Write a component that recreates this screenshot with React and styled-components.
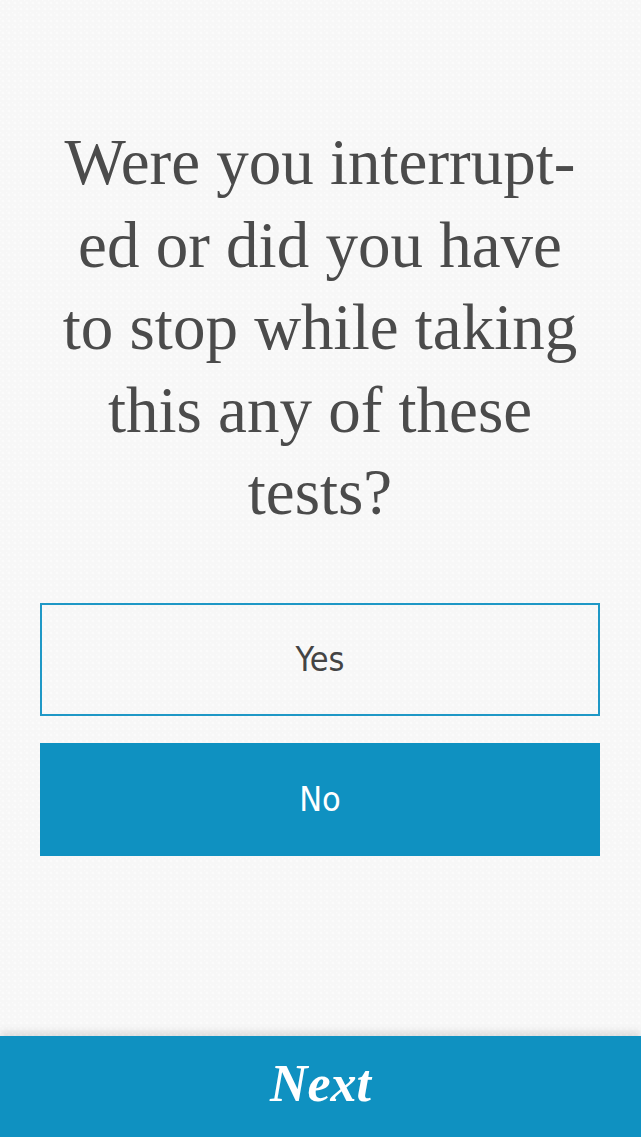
import React, { useState } from "react";
import styled, { createGlobalStyle } from "styled-components";

const GlobalStyle = createGlobalStyle`
  html, body {
    margin: 0;
    padding: 0;
  }
  body {
    background-color: #f7f7f7;
    background-image:
      radial-gradient(circle at 3px 3px, #fbfbfb 1.4px, transparent 1.6px),
      radial-gradient(circle at 0px 0px, #fbfbfb 1.4px, transparent 1.6px);
    background-size: 6px 6px;
  }
`;

const lines = [
  "Were you interrupt-",
  "ed or did you have",
  "to stop while taking",
  "this any of these",
  "tests?",
];

const options = ["Yes", "No"];

export default function App() {
  const [answer, setAnswer] = useState("No");

  return (
    <>
      <GlobalStyle />
      <Page>
        <Content>
          <Question>
            {lines.map((line) => (
              <Line key={line}>{line}</Line>
            ))}
          </Question>
          <Options>
            {options.map((option) => (
              <Option
                key={option}
                $selected={answer === option}
                onClick={() => setAnswer(option)}
              >
                {option}
              </Option>
            ))}
          </Options>
        </Content>
        <Footer>
          <NextButton>Next</NextButton>
        </Footer>
      </Page>
    </>
  );
}

const Page = styled.div`
  display: flex;
  flex-direction: column;
  min-height: 100vh;
`;

const Content = styled.main`
  flex: 1;
  padding: 121px 41px 0 40px;
`;

const Question = styled.h1`
  margin: 0;
  font-family: "Liberation Serif", Georgia, serif;
  font-weight: 400;
  font-size: 65px;
  line-height: 82.5px;
  color: #4b4b4b;
  text-align: center;
`;

const Line = styled.span`
  display: block;
  white-space: nowrap;
`;

const Options = styled.div`
  display: flex;
  flex-direction: column;
  gap: 27px;
  margin-top: 69px;
`;

const Option = styled.button`
  display: flex;
  align-items: center;
  justify-content: center;
  height: 113px;
  padding: 0;
  border: 2px solid ${(p) => (p.$selected ? "#0f91c1" : "#1f98c6")};
  background: ${(p) => (p.$selected ? "#0f91c1" : "transparent")};
  color: ${(p) => (p.$selected ? "#ffffff" : "#444444")};
  font-family: "DejaVu Sans Condensed", "DejaVu Sans", sans-serif;
  font-size: 34px;
  cursor: pointer;
`;

const Footer = styled.footer`
  display: flex;
  align-items: center;
  justify-content: center;
  height: 101px;
  background: #0f91c1;
  box-shadow: 0 -4px 8px rgba(0, 0, 0, 0.12);
`;

const NextButton = styled.button`
  border: none;
  background: none;
  padding: 0 0 6px;
  color: #ffffff;
  font-family: "Liberation Serif", Georgia, serif;
  font-style: italic;
  font-weight: 700;
  font-size: 52px;
  cursor: pointer;
`;
